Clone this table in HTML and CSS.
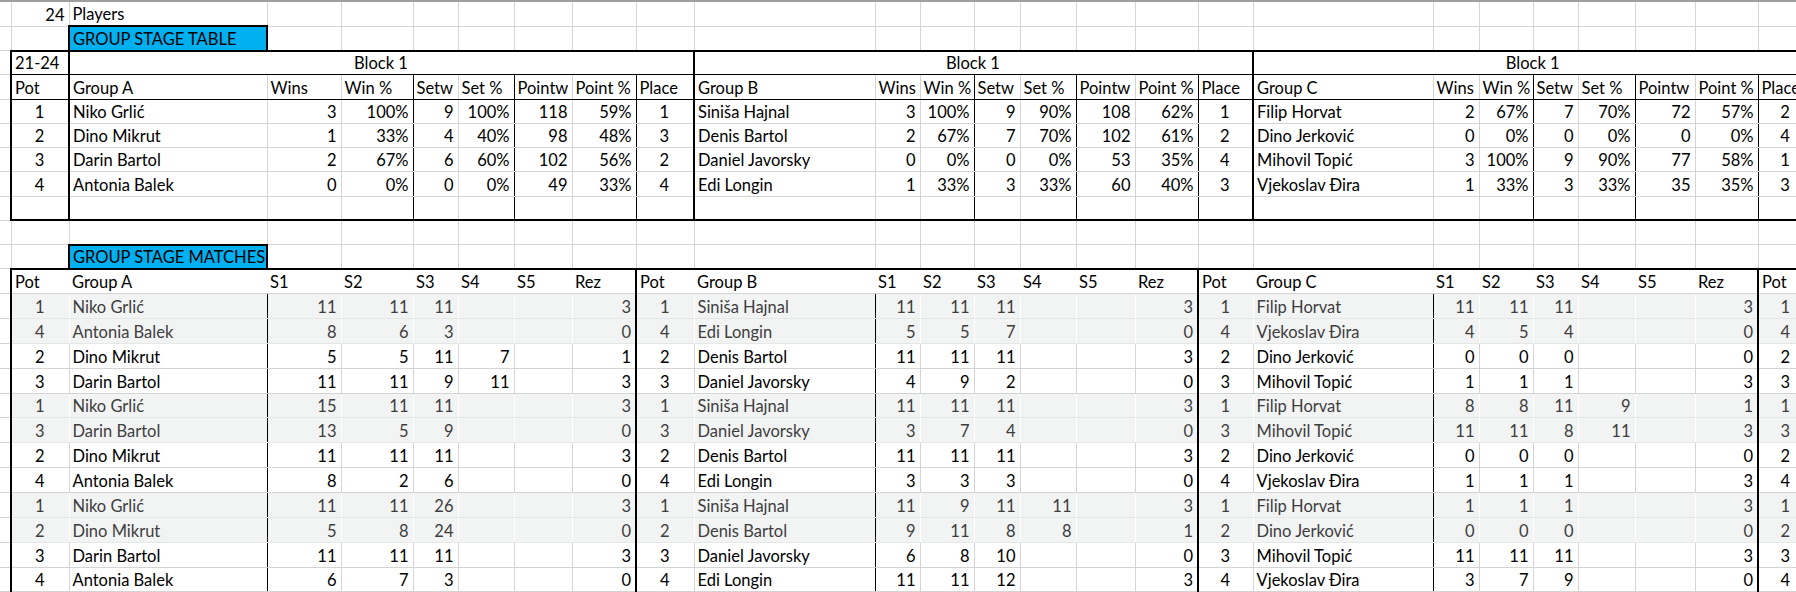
FILE: index.html
```html
<!DOCTYPE html>
<html lang="hr">
<head>
<meta charset="utf-8">
<title>Group stage</title>
<link rel="stylesheet" href="styles.css">
</head>
<body>
<div class="topline"></div>
<table class="sheet">
<colgroup>
<col style="width:11px"><col style="width:58px"><col style="width:198px"><col style="width:74px"><col style="width:72px"><col style="width:45px"><col style="width:56px"><col style="width:58px"><col style="width:64px"><col style="width:58px">
<col style="width:181px"><col style="width:45px"><col style="width:54px"><col style="width:46px"><col style="width:56px"><col style="width:59px"><col style="width:63px"><col style="width:55px">
<col style="width:180px"><col style="width:46px"><col style="width:54px"><col style="width:45px"><col style="width:57px"><col style="width:60px"><col style="width:63px"><col style="width:55px">
</colgroup>
<tbody>
<tr class="r"><td></td><td class="n">24</td><td>Players</td><td></td><td></td><td></td><td></td><td></td><td></td><td></td><td></td><td></td><td></td><td></td><td></td><td></td><td></td><td></td><td></td><td></td><td></td><td></td><td></td><td></td><td></td><td></td></tr>
<tr class="r edge"><td></td><td></td><td class="box">GROUP STAGE TABLE</td><td></td><td></td><td></td><td></td><td></td><td></td><td></td><td></td><td></td><td></td><td></td><td></td><td></td><td></td><td></td><td></td><td></td><td></td><td></td><td></td><td></td><td></td><td></td></tr>
<tr class="r blk"><td></td><td>21-24</td><td colspan="8" class="c">Block 1</td><td colspan="8" class="c">Block 1</td><td colspan="8" class="c">Block 1</td></tr>
<tr class="r t hd"><td></td><td>Pot</td><td>Group A</td><td>Wins</td><td>Win %</td><td>Setw</td><td>Set %</td><td>Pointw</td><td>Point %</td><td>Place</td><td>Group B</td><td>Wins</td><td>Win %</td><td>Setw</td><td>Set %</td><td>Pointw</td><td>Point %</td><td>Place</td><td>Group C</td><td>Wins</td><td>Win %</td><td>Setw</td><td>Set %</td><td>Pointw</td><td>Point %</td><td>Place</td></tr>
<tr class="r t d"><td></td><td>1</td><td>Niko Grlić</td><td>3</td><td>100%</td><td>9</td><td>100%</td><td>118</td><td>59%</td><td>1</td><td>Siniša Hajnal</td><td>3</td><td>100%</td><td>9</td><td>90%</td><td>108</td><td>62%</td><td>1</td><td>Filip Horvat</td><td>2</td><td>67%</td><td>7</td><td>70%</td><td>72</td><td>57%</td><td>2</td></tr>
<tr class="r t d"><td></td><td>2</td><td>Dino Mikrut</td><td>1</td><td>33%</td><td>4</td><td>40%</td><td>98</td><td>48%</td><td>3</td><td>Denis Bartol</td><td>2</td><td>67%</td><td>7</td><td>70%</td><td>102</td><td>61%</td><td>2</td><td>Dino Jerković</td><td>0</td><td>0%</td><td>0</td><td>0%</td><td>0</td><td>0%</td><td>4</td></tr>
<tr class="r t d"><td></td><td>3</td><td>Darin Bartol</td><td>2</td><td>67%</td><td>6</td><td>60%</td><td>102</td><td>56%</td><td>2</td><td>Daniel Javorsky</td><td>0</td><td>0%</td><td>0</td><td>0%</td><td>53</td><td>35%</td><td>4</td><td>Mihovil Topić</td><td>3</td><td>100%</td><td>9</td><td>90%</td><td>77</td><td>58%</td><td>1</td></tr>
<tr class="r t d"><td></td><td>4</td><td>Antonia Balek</td><td>0</td><td>0%</td><td>0</td><td>0%</td><td>49</td><td>33%</td><td>4</td><td>Edi Longin</td><td>1</td><td>33%</td><td>3</td><td>33%</td><td>60</td><td>40%</td><td>3</td><td>Vjekoslav Đira</td><td>1</td><td>33%</td><td>3</td><td>33%</td><td>35</td><td>35%</td><td>3</td></tr>
<tr class="r t end"><td></td><td></td><td></td><td></td><td></td><td></td><td></td><td></td><td></td><td></td><td></td><td></td><td></td><td></td><td></td><td></td><td></td><td></td><td></td><td></td><td></td><td></td><td></td><td></td><td></td><td></td></tr>
<tr class="r"><td></td><td></td><td></td><td></td><td></td><td></td><td></td><td></td><td></td><td></td><td></td><td></td><td></td><td></td><td></td><td></td><td></td><td></td><td></td><td></td><td></td><td></td><td></td><td></td><td></td><td></td></tr>
<tr class="r edge"><td></td><td></td><td class="box">GROUP STAGE MATCHES</td><td></td><td></td><td></td><td></td><td></td><td></td><td></td><td></td><td></td><td></td><td></td><td></td><td></td><td></td><td></td><td></td><td></td><td></td><td></td><td></td><td></td><td></td><td></td></tr>
<tr class="m mh"><td></td><td>Pot</td><td>Group A</td><td>S1</td><td>S2</td><td>S3</td><td>S4</td><td>S5</td><td>Rez</td><td>Pot</td><td>Group B</td><td>S1</td><td>S2</td><td>S3</td><td>S4</td><td>S5</td><td>Rez</td><td>Pot</td><td>Group C</td><td>S1</td><td>S2</td><td>S3</td><td>S4</td><td>S5</td><td>Rez</td><td>Pot</td></tr>
<tr class="m d sh"><td></td><td>1</td><td>Niko Grlić</td><td>11</td><td>11</td><td>11</td><td></td><td></td><td>3</td><td>1</td><td>Siniša Hajnal</td><td>11</td><td>11</td><td>11</td><td></td><td></td><td>3</td><td>1</td><td>Filip Horvat</td><td>11</td><td>11</td><td>11</td><td></td><td></td><td>3</td><td>1</td></tr>
<tr class="m d sh"><td></td><td>4</td><td>Antonia Balek</td><td>8</td><td>6</td><td>3</td><td></td><td></td><td>0</td><td>4</td><td>Edi Longin</td><td>5</td><td>5</td><td>7</td><td></td><td></td><td>0</td><td>4</td><td>Vjekoslav Đira</td><td>4</td><td>5</td><td>4</td><td></td><td></td><td>0</td><td>4</td></tr>
<tr class="m d"><td></td><td>2</td><td>Dino Mikrut</td><td>5</td><td>5</td><td>11</td><td>7</td><td></td><td>1</td><td>2</td><td>Denis Bartol</td><td>11</td><td>11</td><td>11</td><td></td><td></td><td>3</td><td>2</td><td>Dino Jerković</td><td>0</td><td>0</td><td>0</td><td></td><td></td><td>0</td><td>2</td></tr>
<tr class="m d"><td></td><td>3</td><td>Darin Bartol</td><td>11</td><td>11</td><td>9</td><td>11</td><td></td><td>3</td><td>3</td><td>Daniel Javorsky</td><td>4</td><td>9</td><td>2</td><td></td><td></td><td>0</td><td>3</td><td>Mihovil Topić</td><td>1</td><td>1</td><td>1</td><td></td><td></td><td>3</td><td>3</td></tr>
<tr class="m d sh"><td></td><td>1</td><td>Niko Grlić</td><td>15</td><td>11</td><td>11</td><td></td><td></td><td>3</td><td>1</td><td>Siniša Hajnal</td><td>11</td><td>11</td><td>11</td><td></td><td></td><td>3</td><td>1</td><td>Filip Horvat</td><td>8</td><td>8</td><td>11</td><td>9</td><td></td><td>1</td><td>1</td></tr>
<tr class="m d sh"><td></td><td>3</td><td>Darin Bartol</td><td>13</td><td>5</td><td>9</td><td></td><td></td><td>0</td><td>3</td><td>Daniel Javorsky</td><td>3</td><td>7</td><td>4</td><td></td><td></td><td>0</td><td>3</td><td>Mihovil Topić</td><td>11</td><td>11</td><td>8</td><td>11</td><td></td><td>3</td><td>3</td></tr>
<tr class="m d"><td></td><td>2</td><td>Dino Mikrut</td><td>11</td><td>11</td><td>11</td><td></td><td></td><td>3</td><td>2</td><td>Denis Bartol</td><td>11</td><td>11</td><td>11</td><td></td><td></td><td>3</td><td>2</td><td>Dino Jerković</td><td>0</td><td>0</td><td>0</td><td></td><td></td><td>0</td><td>2</td></tr>
<tr class="m d"><td></td><td>4</td><td>Antonia Balek</td><td>8</td><td>2</td><td>6</td><td></td><td></td><td>0</td><td>4</td><td>Edi Longin</td><td>3</td><td>3</td><td>3</td><td></td><td></td><td>0</td><td>4</td><td>Vjekoslav Đira</td><td>1</td><td>1</td><td>1</td><td></td><td></td><td>3</td><td>4</td></tr>
<tr class="m d sh"><td></td><td>1</td><td>Niko Grlić</td><td>11</td><td>11</td><td>26</td><td></td><td></td><td>3</td><td>1</td><td>Siniša Hajnal</td><td>11</td><td>9</td><td>11</td><td>11</td><td></td><td>3</td><td>1</td><td>Filip Horvat</td><td>1</td><td>1</td><td>1</td><td></td><td></td><td>3</td><td>1</td></tr>
<tr class="m d sh"><td></td><td>2</td><td>Dino Mikrut</td><td>5</td><td>8</td><td>24</td><td></td><td></td><td>0</td><td>2</td><td>Denis Bartol</td><td>9</td><td>11</td><td>8</td><td>8</td><td></td><td>1</td><td>2</td><td>Dino Jerković</td><td>0</td><td>0</td><td>0</td><td></td><td></td><td>0</td><td>2</td></tr>
<tr class="m d"><td></td><td>3</td><td>Darin Bartol</td><td>11</td><td>11</td><td>11</td><td></td><td></td><td>3</td><td>3</td><td>Daniel Javorsky</td><td>6</td><td>8</td><td>10</td><td></td><td></td><td>0</td><td>3</td><td>Mihovil Topić</td><td>11</td><td>11</td><td>11</td><td></td><td></td><td>3</td><td>3</td></tr>
<tr class="m d"><td></td><td>4</td><td>Antonia Balek</td><td>6</td><td>7</td><td>3</td><td></td><td></td><td>0</td><td>4</td><td>Edi Longin</td><td>11</td><td>11</td><td>12</td><td></td><td></td><td>3</td><td>4</td><td>Vjekoslav Đira</td><td>3</td><td>7</td><td>9</td><td></td><td></td><td>0</td><td>4</td></tr>
</tbody>
</table>
</body>
</html>
```
FILE: styles.css
```css
html, body {
  margin: 0;
  padding: 0;
  background: #fff;
}
body {
  width: 1796px;
  height: 592px;
  overflow: hidden;
  font-family: Lato, "Noto Sans", sans-serif;
  font-size: 16.5px;
  color: #000;
}
.topline {
  height: 2px;
  background: #9e9e9e;
}
.sheet {
  border-collapse: collapse;
  table-layout: fixed;
  width: 1813px;
}
.sheet td {
  padding: 0 4px 1px 3px;
  border-right: 1px solid #d4d4d4;
  border-bottom: 1px solid #d4d4d4;
  white-space: nowrap;
  overflow: hidden;
  vertical-align: bottom;
  line-height: 20px;
  text-align: left;
}
.r { height: 24.27px; }
.m { height: 24.85px; }
.n { text-align: right; }
.sheet td.n { text-align: right; }
.sheet td.c { text-align: center; }

/* blue title boxes */
.sheet td.box {
  background: #00b0f0;
  border: 2px solid #000;
  border-bottom: 2px solid #000;
}
.edge td:nth-child(n+2) { border-bottom: 2px solid #000; }

/* block row */
.blk td:nth-child(-n+4) { border-right: 2px solid #000; }
.blk td:nth-child(n+2) { border-bottom: 1px solid #000; }

/* top table */
.t td:nth-child(1),
.t td:nth-child(2),
.t td:nth-child(10),
.t td:nth-child(18) { border-right: 2px solid #000; }
.t td:nth-child(5),
.t td:nth-child(7),
.t td:nth-child(9),
.t td:nth-child(13),
.t td:nth-child(15),
.t td:nth-child(17),
.t td:nth-child(21),
.t td:nth-child(23),
.t td:nth-child(25) { border-right: 1px solid #000; }
.t.hd td:nth-child(n+2) { border-bottom: 1px solid #000; }
.t.end td:nth-child(n+2) { border-bottom: 2px solid #000; }

/* data alignment */
.d td { text-align: right; }
.sheet .d td:nth-child(8n+2) { text-align: center; }
.sheet .d td:nth-child(8n+3) { text-align: left; }

/* matches */
.m.mh td:nth-child(n+2) { border-right: none; }
.m.sh td:nth-child(n+2) {
  background: #f2f3f3;
  color: #3e3e3e;
  border-right: 1px solid #ffffff;
  border-bottom: 1px solid #e6e8e8;
}
.sheet .m td:nth-child(3),
.sheet .m td:nth-child(11),
.sheet .m td:nth-child(19) { border-right: 1px solid #000; }
.sheet .m.mh td:nth-child(3),
.sheet .m.mh td:nth-child(11),
.sheet .m.mh td:nth-child(19) { border-right: none; }
.sheet .m td:nth-child(1),
.sheet .m td:nth-child(9),
.sheet .m td:nth-child(17),
.sheet .m td:nth-child(25) { border-right: 2px solid #000; }
```
